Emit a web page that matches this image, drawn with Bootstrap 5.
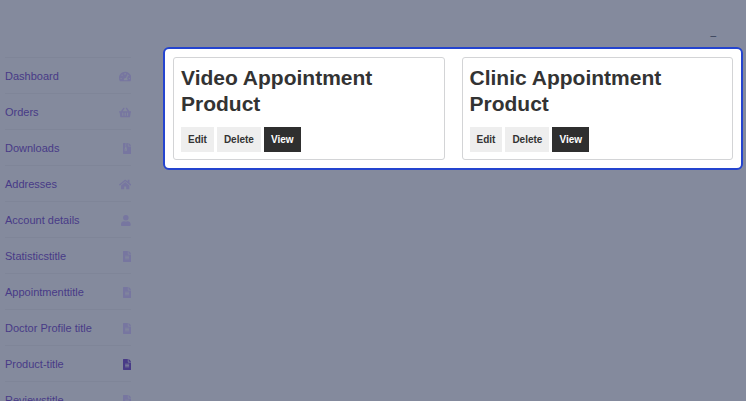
<!DOCTYPE html>
<html lang="en">
<head>
<meta charset="utf-8">
<meta name="viewport" content="width=device-width, initial-scale=1">
<title>My products</title>
<link href="https://cdn.jsdelivr.net/npm/bootstrap@5.3.0/dist/css/bootstrap.min.css" rel="stylesheet">
<style>
body { background: #848a9d; color: #333; font-family: "Liberation Sans", Arial, sans-serif; font-size: 11px; }
.topbar { height: 47px; padding: 25px 30px 0 0; font-size: 10px; line-height: 14px; color: #2c3652; }
.side { width: 131px; padding-left: 5px; margin: 10px 32px 0 0; }
.side ul { border-top: 1px solid #7f8598; }
.side li { border-bottom: 1px solid #7f8598; }
.side a { color: #483a87; line-height: 20px; padding: 8px 0 7px; }
.side svg { height: 11px; fill: #7776a0; }
.side .active svg { fill: #483a87; }
.panel { border: 2px solid #2444cf; border-radius: 6px; padding: 8px; margin-right: 3px; gap: 17px; }
.product { border: 1px solid #d3d4d6; border-radius: 3px; padding: 7px; }
.product h2 { font-size: 21px; line-height: 26px; margin-bottom: 10px; }
.actions { gap: 3px; }
.actions .btn { --bs-btn-border-radius: 0; --bs-btn-border-width: 0; --bs-btn-padding-x: 7px; --bs-btn-padding-y: 4px; --bs-btn-font-size: 10px; --bs-btn-bg: #eee; --bs-btn-color: #333; --bs-btn-hover-bg: #ddd; line-height: 17px; }
.actions .btn-view { --bs-btn-bg: #2f2f2f; --bs-btn-color: #fff; --bs-btn-hover-bg: #111; --bs-btn-hover-color: #fff; }
</style>
</head>
<body class="vh-100 overflow-hidden">
<svg class="d-none">
  <symbol id="doc" viewBox="0 0 384 512"><path d="M224 136V0H24C10.700 0 0 10.700 0 24v464c0 13.300 10.700 24 24 24h336c13.300 0 24-10.700 24-24V160H248c-13.200 0-24-10.800-24-24zm64 236c0 6.600-5.400 12-12 12H108c-6.600 0-12-5.400-12-12v-8c0-6.600 5.400-12 12-12h168c6.600 0 12 5.400 12 12v8zm0-64c0 6.600-5.400 12-12 12H108c-6.600 0-12-5.400-12-12v-8c0-6.600 5.400-12 12-12h168c6.600 0 12 5.400 12 12v8zm0-72v8c0 6.600-5.400 12-12 12H108c-6.600 0-12-5.400-12-12v-8c0-6.600 5.400-12 12-12h168c6.600 0 12 5.400 12 12zm96-114v6H256V0h6c6 0 12 2 17 7l98 98c5 5 7 11 7 17z"/></symbol>
</svg>
<header class="topbar text-end">_</header>
<div class="d-flex align-items-start">
  <nav class="side flex-shrink-0" aria-label="Account">
    <ul class="list-unstyled mb-0">
      <li><a href="#" class="d-flex justify-content-between align-items-center text-decoration-none">Dashboard <svg viewBox="0 0 576 512" aria-hidden="true"><path fill-rule="evenodd" d="M288 32C129 32 0 161 0 320c0 53 14 102 39 145 6 9 16 15 27 15h444c11 0 21-6 27-15 25-43 39-92 39-145C576 161 447 32 288 32zM288 96a32 32 0 0 1 30 42l-10 29c-6 5-13 9-20 9a32 32 0 0 1 0-80zM96 384a32 32 0 1 1 0-64 32 32 0 0 1 0 64zm48-160a32 32 0 1 1 0-64 32 32 0 0 1 0 64zm247-72 45 15-61 184c25 20 32 50 22 81H233c-24-48 5-108 55-112l42-4zm41 72a32 32 0 1 1 0-64 32 32 0 0 1 0 64zm48 160a32 32 0 1 1 0-64 32 32 0 0 1 0 64z"/></svg></a></li>
      <li><a href="#" class="d-flex justify-content-between align-items-center text-decoration-none">Orders <svg viewBox="0 0 576 512" aria-hidden="true"><path fill-rule="evenodd" d="M576 216v16c0 13-11 24-24 24h-8l-26 182c-3 24-24 42-47 42H105c-23 0-44-18-47-42L32 256h-8c-13 0-24-11-24-24v-16c0-13 11-24 24-24h67L198 45a32 32 0 0 1 52 38l-79 109h234L326 83a32 32 0 0 1 52-38l107 147h67c13 0 24 11 24 24zM312 392V280c0-13-11-24-24-24s-24 11-24 24v112c0 13 11 24 24 24s24-11 24-24zm112 0V280c0-13-11-24-24-24s-24 11-24 24v112c0 13 11 24 24 24s24-11 24-24zm-224 0V280c0-13-11-24-24-24s-24 11-24 24v112c0 13 11 24 24 24s24-11 24-24z"/></svg></a></li>
      <li><a href="#" class="d-flex justify-content-between align-items-center text-decoration-none">Downloads <svg viewBox="0 0 384 512" aria-hidden="true"><path fill-rule="evenodd" d="M377 105 279 7c-5-5-11-7-17-7h-6v128h128v-6c0-6-2-12-7-17zM224 136V0h-64v32h-32V0H24C11 0 0 11 0 24v464c0 13 11 24 24 24h336c13 0 24-11 24-24V160H248c-13 0-24-11-24-24zM96 32h32v32H96zm32 352c-38 0-66-31-58-67l26-125v-32h32v-32H96V96h32V64h32v32h-32v32h32v32h-32v32h22c6 0 11 4 12 10l24 115c8 36-20 67-58 67zm0-81c-18 0-32 11-32 25s14 24 32 24 33-10 33-24-15-25-33-25z"/></svg></a></li>
      <li><a href="#" class="d-flex justify-content-between align-items-center text-decoration-none">Addresses <svg viewBox="0 0 576 512" aria-hidden="true"><path d="M280 148 96 300v164c0 9 7 16 16 16h112c9 0 16-7 16-16v-96c0-9 7-16 16-16h64c9 0 16 7 16 16v96c0 9 7 16 16 16h112c9 0 16-7 16-16V300L296 148c-5-4-11-4-16 0zM572 251l-84-69V44c0-7-5-12-12-12h-56c-7 0-12 5-12 12v73l-90-74c-17-14-43-14-60 0L4 251c-5 4-5 12-1 17l25 31c5 5 12 6 17 2L280 107c5-4 11-4 16 0l235 194c5 4 13 3 17-2l25-31c5-5 4-13-1-17z"/></svg></a></li>
      <li><a href="#" class="d-flex justify-content-between align-items-center text-decoration-none">Account details <svg viewBox="0 0 448 512" aria-hidden="true"><path d="M224 256a128 128 0 1 0 0-256 128 128 0 0 0 0 256zm90 32h-17c-46 21-100 21-146 0h-17C60 288 0 348 0 422v42c0 27 21 48 48 48h352c27 0 48-21 48-48v-42c0-74-60-134-134-134z"/></svg></a></li>
      <li><a href="#" class="d-flex justify-content-between align-items-center text-decoration-none">Statisticstitle <svg viewBox="0 0 384 512" aria-hidden="true"><use href="#doc"/></svg></a></li>
      <li><a href="#" class="d-flex justify-content-between align-items-center text-decoration-none">Appointmenttitle <svg viewBox="0 0 384 512" aria-hidden="true"><use href="#doc"/></svg></a></li>
      <li><a href="#" class="d-flex justify-content-between align-items-center text-decoration-none">Doctor Profile title <svg viewBox="0 0 384 512" aria-hidden="true"><use href="#doc"/></svg></a></li>
      <li><a href="#" class="active d-flex justify-content-between align-items-center text-decoration-none" aria-current="page">Product-title <svg viewBox="0 0 384 512" aria-hidden="true"><use href="#doc"/></svg></a></li>
      <li><a href="#" class="d-flex justify-content-between align-items-center text-decoration-none">Reviewstitle <svg viewBox="0 0 384 512" aria-hidden="true"><use href="#doc"/></svg></a></li>
    </ul>
  </nav>
  <main class="panel d-flex flex-fill bg-white">
    <article class="product flex-fill w-50">
      <h2 class="fw-bold">Video Appointment Product</h2>
      <div class="actions d-flex">
        <button type="button" class="btn fw-bold">Edit</button>
        <button type="button" class="btn fw-bold">Delete</button>
        <button type="button" class="btn btn-view fw-bold">View</button>
      </div>
    </article>
    <article class="product flex-fill w-50">
      <h2 class="fw-bold">Clinic Appointment Product</h2>
      <div class="actions d-flex">
        <button type="button" class="btn fw-bold">Edit</button>
        <button type="button" class="btn fw-bold">Delete</button>
        <button type="button" class="btn btn-view fw-bold">View</button>
      </div>
    </article>
  </main>
</div>
<script src="https://cdn.jsdelivr.net/npm/bootstrap@5.3.0/dist/js/bootstrap.bundle.min.js"></script>
</body>
</html>
